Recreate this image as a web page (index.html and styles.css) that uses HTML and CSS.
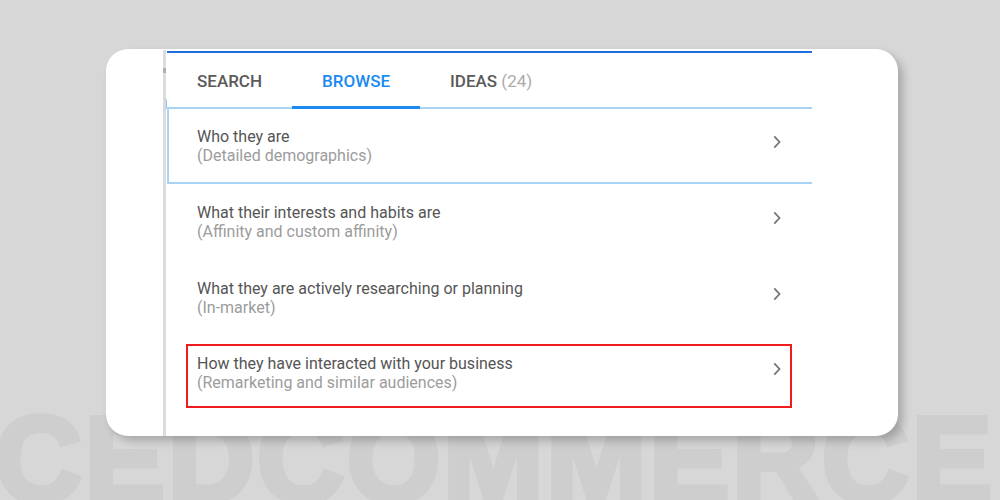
FILE: index.html
```html
<!DOCTYPE html>
<html>
<head>
<meta charset="utf-8">
<link rel="stylesheet" href="styles.css">
</head>
<body>
<div class="page">
  <div class="watermark">CEDCOMMERCE</div>
  <div class="card">
    <div class="rail">
      <span class="rail-mark"></span>
      <span class="rail-arc"></span>
    </div>
    <div class="panel">
      <div class="tabs">
        <div class="tab">SEARCH</div>
        <div class="tab active">BROWSE</div>
        <div class="tab">IDEAS&nbsp;<span class="count">(24)</span></div>
      </div>
      <div class="item first">
        <div class="text">
          <div class="title">Who they are</div>
          <div class="sub">(Detailed demographics)</div>
        </div>
        <svg class="chev" width="8" height="14" viewBox="0 0 8 14"><polyline points="1.3,1.3 6.5,7 1.3,12.7"/></svg>
      </div>
      <div class="item">
        <div class="text">
          <div class="title">What their interests and habits are</div>
          <div class="sub">(Affinity and custom affinity)</div>
        </div>
        <svg class="chev" width="8" height="14" viewBox="0 0 8 14"><polyline points="1.3,1.3 6.5,7 1.3,12.7"/></svg>
      </div>
      <div class="item">
        <div class="text">
          <div class="title">What they are actively researching or planning</div>
          <div class="sub">(In-market)</div>
        </div>
        <svg class="chev" width="8" height="14" viewBox="0 0 8 14"><polyline points="1.3,1.3 6.5,7 1.3,12.7"/></svg>
      </div>
      <div class="item hl">
        <div class="hl-box">
          <div class="text">
            <div class="title">How they have interacted with your business</div>
            <div class="sub">(Remarketing and similar audiences)</div>
          </div>
          <svg class="chev" width="8" height="14" viewBox="0 0 8 14"><polyline points="1.3,1.3 6.5,7 1.3,12.7"/></svg>
        </div>
      </div>
    </div>
  </div>
</div>
</body>
</html>
```
FILE: styles.css
```css
html, body {
  margin: 0;
  padding: 0;
}
body {
  background: #d7d7d7;
  font-family: Roboto, "Liberation Sans", Arial, sans-serif;
}
.page {
  position: relative;
  width: 1000px;
  height: 500px;
  overflow: hidden;
  background: #d7d7d7;
  padding-top: 49px;
  box-sizing: border-box;
}
.watermark {
  position: absolute;
  left: -5px;
  top: 399px;
  font-family: "Liberation Sans", Arial, sans-serif;
  font-weight: 700;
  font-size: 120px;
  line-height: 120px;
  letter-spacing: 3px;
  color: #cecece;
  -webkit-text-stroke: 6px #cecece;
  white-space: nowrap;
  z-index: 0;
}
.card {
  position: relative;
  z-index: 1;
  margin-left: 106px;
  width: 792px;
  height: 387px;
  background: #fff;
  border-radius: 22px;
  box-shadow: 5px 5px 9px rgba(0, 0, 0, 0.22);
  display: flex;
  padding-left: 57px;
  box-sizing: border-box;
  overflow: hidden;
}
.rail {
  width: 3px;
  margin-top: 1px;
  margin-right: 1px;
  background: #dcdcdc;
  display: flex;
  flex-direction: column;
  align-items: flex-start;
}
.rail-mark {
  margin-top: 18px;
  width: 3px;
  height: 5px;
  background: #b0b0b0;
}
.rail-arc {
  margin-top: 25px;
  width: 3px;
  height: 12px;
  border-right: 1.5px solid #8fc0ee;
  border-radius: 0 7px 7px 0;
}
.panel {
  width: 645px;
  margin-top: 2px;
  border-top: 2px solid #1f6edb;
  background: #fff;
}
.tabs {
  display: flex;
  height: 56px;
  box-shadow: inset 0 -2px 0 #a9d3f5;
}
.tab {
  display: flex;
  align-items: center;
  padding: 0 30px;
  font-size: 17px;
  font-weight: 500;
  color: #5a5a5a;
  box-sizing: border-box;
}
.tab.active {
  color: #1b8bf2;
  border-top: 3px solid transparent;
  border-bottom: 3px solid #1b8bf2;
}
.count {
  color: #ababab;
  font-weight: 400;
}
.item {
  display: flex;
  align-items: center;
  justify-content: space-between;
  height: 76px;
  padding: 0 31px 0 30px;
  box-sizing: border-box;
}
.item.first {
  height: 75px;
  padding-left: 28px;
  border-left: 2px solid #a9d3f5;
  border-bottom: 2px solid #a9d3f5;
}
.item.hl {
  display: block;
  padding: 8px 20px 4px 19px;
}
.hl-box {
  height: 64px;
  box-sizing: border-box;
  border: 2px solid #f01c1c;
  display: flex;
  align-items: center;
  justify-content: space-between;
  padding: 0 9px 6px 9px;
}
.title {
  font-size: 16px;
  line-height: 19px;
  color: #555;
}
.sub {
  font-size: 16px;
  line-height: 19px;
  color: #9c9c9c;
}
.chev {
  display: block;
  margin-bottom: 8px;
}
.chev polyline {
  fill: none;
  stroke: #767676;
  stroke-width: 1.8;
}
```
